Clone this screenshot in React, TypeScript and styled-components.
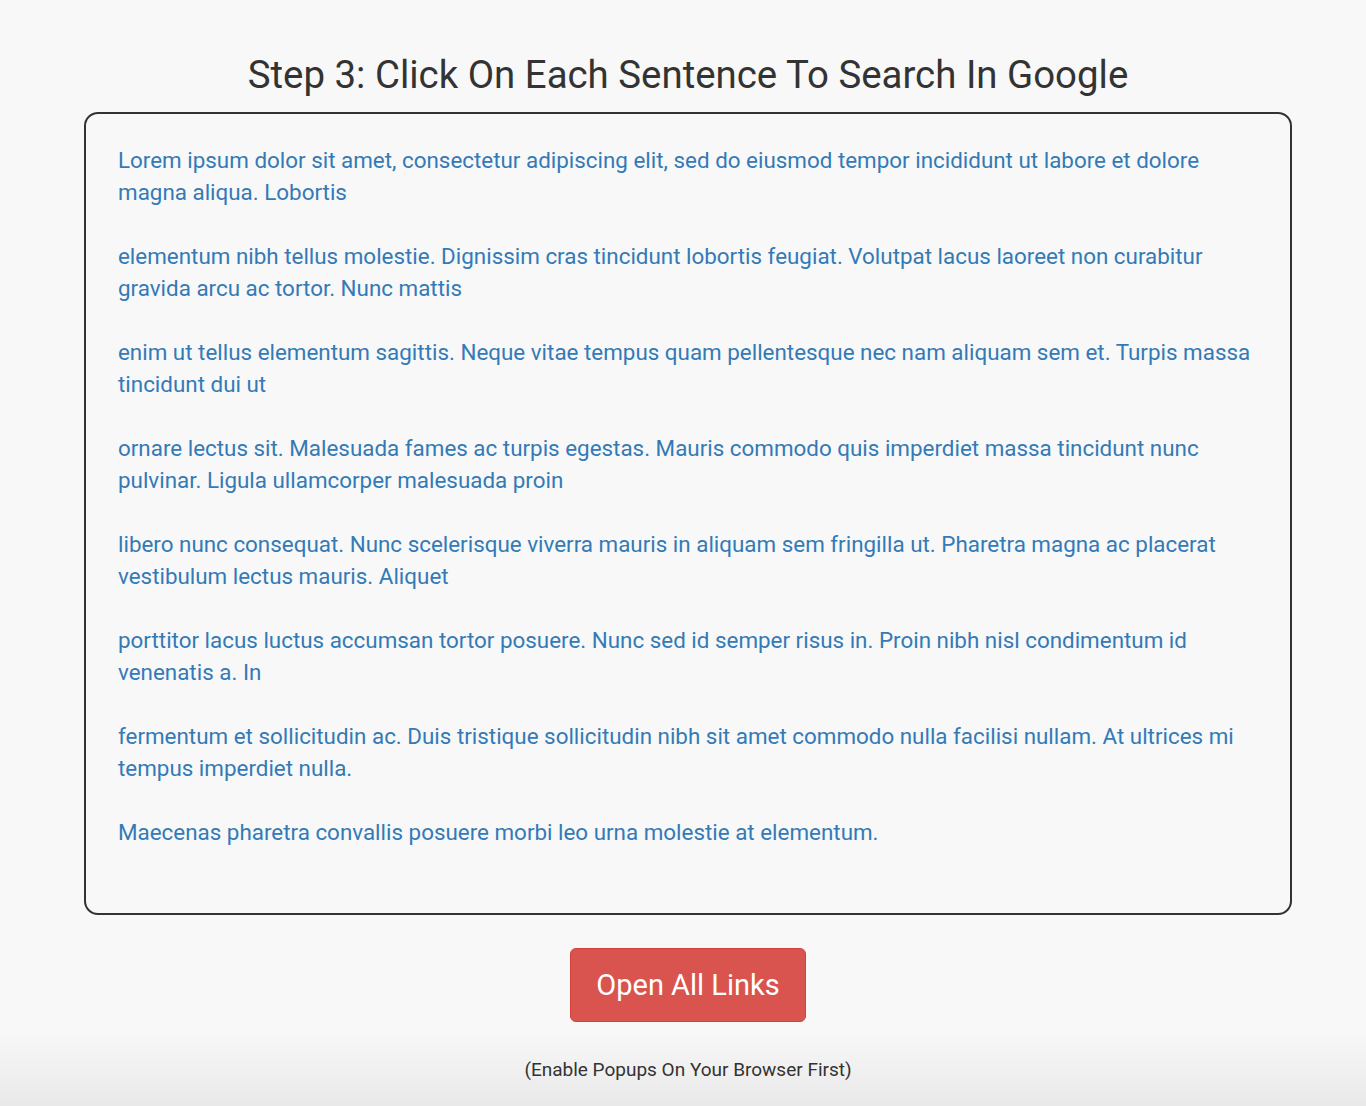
import styled, { createGlobalStyle } from 'styled-components';

const sentences = [
  'Lorem ipsum dolor sit amet, consectetur adipiscing elit, sed do eiusmod tempor incididunt ut labore et dolore magna aliqua. Lobortis',
  'elementum nibh tellus molestie. Dignissim cras tincidunt lobortis feugiat. Volutpat lacus laoreet non curabitur gravida arcu ac tortor. Nunc mattis',
  'enim ut tellus elementum sagittis. Neque vitae tempus quam pellentesque nec nam aliquam sem et. Turpis massa tincidunt dui ut',
  'ornare lectus sit. Malesuada fames ac turpis egestas. Mauris commodo quis imperdiet massa tincidunt nunc pulvinar. Ligula ullamcorper malesuada proin',
  'libero nunc consequat. Nunc scelerisque viverra mauris in aliquam sem fringilla ut. Pharetra magna ac placerat vestibulum lectus mauris. Aliquet',
  'porttitor lacus luctus accumsan tortor posuere. Nunc sed id semper risus in. Proin nibh nisl condimentum id venenatis a. In',
  'fermentum et sollicitudin ac. Duis tristique sollicitudin nibh sit amet commodo nulla facilisi nullam. At ultrices mi tempus imperdiet nulla.',
  'Maecenas pharetra convallis posuere morbi leo urna molestie at elementum.',
];

const searchUrl = (text: string) =>
  'https://www.google.com/search?q=' + encodeURIComponent(text);

const App = () => {
  return (
    <>
      <GlobalStyle />
      <Page>
        <Title>Step 3: Click On Each Sentence To Search In Google</Title>
        <SentenceBox>
          {sentences.map(sentence => (
            <Sentence key={sentence}>
              <SentenceLink href={searchUrl(sentence)} target="_blank">
                {sentence}
              </SentenceLink>
            </Sentence>
          ))}
        </SentenceBox>
        <OpenButton type="button">Open All Links</OpenButton>
        <Hint>(Enable Popups On Your Browser First)</Hint>
      </Page>
    </>
  );
};

const GlobalStyle = createGlobalStyle`
  * {
    box-sizing: border-box;
  }
  body {
    margin: 0;
    background: #f8f8f8;
    font-family: Roboto, 'Liberation Sans', sans-serif;
    color: #333;
  }
`;

const Page = styled.div`
  display: flex;
  flex-direction: column;
  align-items: center;
  height: 1106px;
  padding: 53px 0 0 10px;
  background: linear-gradient(to bottom, #f8f8f8 0, #f8f8f8 1030px, #e9e9e9 1106px);
`;

const Title = styled.h1`
  margin: 0 0 15px;
  font-size: 38.4px;
  font-weight: 400;
  line-height: 44px;
  color: #333;
`;

const SentenceBox = styled.div`
  width: 1208px;
  padding: 30px 32px 33px;
  border: 2px solid #333;
  border-radius: 14px;
`;

const Sentence = styled.p`
  margin: 0 0 32px;
  font-size: 22.4px;
  line-height: 32px;
`;

const SentenceLink = styled.a`
  color: #337ab7;
  text-decoration: none;
  &:hover {
    text-decoration: underline;
  }
`;

const OpenButton = styled.button`
  margin-top: 33px;
  width: 236px;
  height: 74px;
  padding: 0;
  border: 1px solid #d43f3a;
  border-radius: 6px;
  background: #d9534f;
  color: #fff;
  font-family: Roboto, 'Liberation Sans', sans-serif;
  font-size: 29px;
  cursor: pointer;
`;

const Hint = styled.p`
  margin: 36px 0 0;
  font-size: 19px;
  line-height: 24px;
  color: #333;
`;

export default App;
